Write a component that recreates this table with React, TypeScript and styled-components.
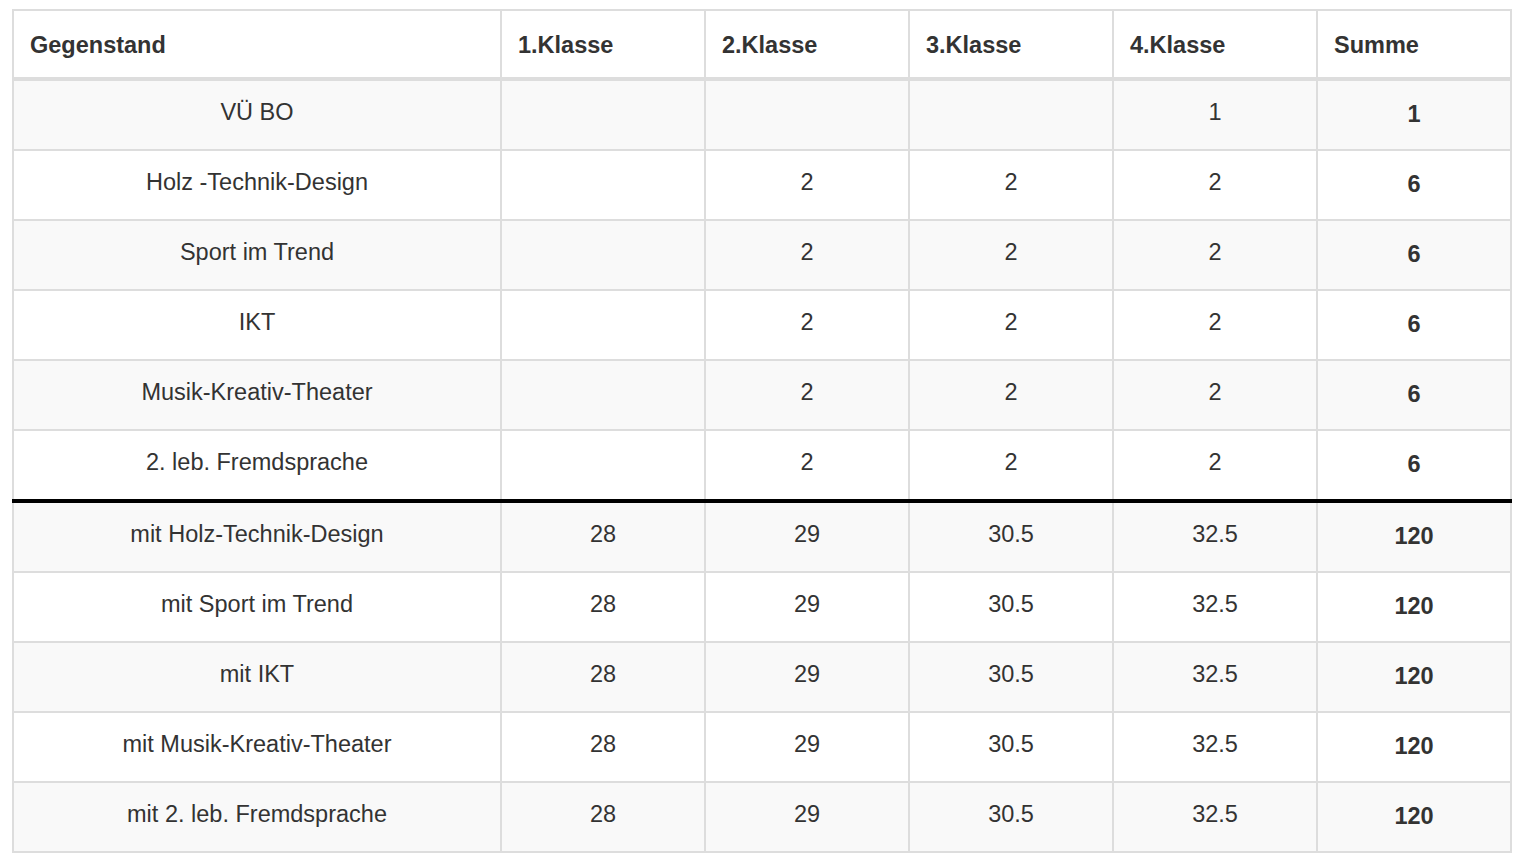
import React from "react";
import styled, { createGlobalStyle } from "styled-components";

const Global = createGlobalStyle`
  html, body { margin: 0; padding: 0; background: #fff; }
  body { font-family: "Liberation Sans", Arial, sans-serif; color: #333; }
`;

const Page = styled.div`
  padding: 9px 12px;
`;

const Table = styled.table`
  width: 1498px;
  table-layout: fixed;
  border-collapse: collapse;
  border: 2px solid #ddd;
  font-size: 23.5px;
  line-height: 36px;
  color: #333;
`;

const Col = styled.col<{ $w: number }>`
  width: ${(p) => p.$w}px;
`;

const HeadCell = styled.th`
  text-align: left;
  font-weight: bold;
  padding: 16px 16px 14px;
  border: 2px solid #ddd;
  border-bottom-width: 4px;
  background: #fff;
  vertical-align: top;
`;

const Body = styled.tbody`
  tr:nth-child(odd) td { background: #f9f9f9; }
  tr:nth-child(even) td { background: #fff; }
`;

const Cell = styled.td<{ $bold?: boolean }>`
  text-align: center;
  vertical-align: top;
  border: 2px solid #ddd;
  padding: ${(p) => (p.$bold ? "15px 16px 17px" : "13px 16px 19px")};
  font-weight: ${(p) => (p.$bold ? "bold" : "normal")};
`;

const Divider = styled.tr`
  td { border-top: 4px solid #000; }
`;

type Row = [string, string, string, string, string, string];

const electives: Row[] = [
  ["VÜ BO", "", "", "", "1", "1"],
  ["Holz -Technik-Design", "", "2", "2", "2", "6"],
  ["Sport im Trend", "", "2", "2", "2", "6"],
  ["IKT", "", "2", "2", "2", "6"],
  ["Musik-Kreativ-Theater", "", "2", "2", "2", "6"],
  ["2. leb. Fremdsprache", "", "2", "2", "2", "6"],
];

const totals: Row[] = [
  ["mit Holz-Technik-Design", "28", "29", "30.5", "32.5", "120"],
  ["mit Sport im Trend", "28", "29", "30.5", "32.5", "120"],
  ["mit IKT", "28", "29", "30.5", "32.5", "120"],
  ["mit Musik-Kreativ-Theater", "28", "29", "30.5", "32.5", "120"],
  ["mit 2. leb. Fremdsprache", "28", "29", "30.5", "32.5", "120"],
];

const headers = ["Gegenstand", "1.Klasse", "2.Klasse", "3.Klasse", "4.Klasse", "Summe"];
const widths = [488, 204, 204, 204, 204, 194];

const renderRow = (r: Row, i: number, divider = false) => {
  const cells = r.map((c, j) => (
    <Cell key={j} $bold={j === 5}>
      {c}
    </Cell>
  ));
  return divider ? <Divider key={i}>{cells}</Divider> : <tr key={i}>{cells}</tr>;
};

export default function App() {
  return (
    <>
      <Global />
      <Page>
        <Table>
          <colgroup>
            {widths.map((w, i) => (
              <Col key={i} $w={w} />
            ))}
          </colgroup>
          <thead>
            <tr>
              {headers.map((h) => (
                <HeadCell key={h}>{h}</HeadCell>
              ))}
            </tr>
          </thead>
          <Body>{electives.map((r, i) => renderRow(r, i))}</Body>
          <Body>{totals.map((r, i) => renderRow(r, i, i === 0))}</Body>
        </Table>
      </Page>
    </>
  );
}
